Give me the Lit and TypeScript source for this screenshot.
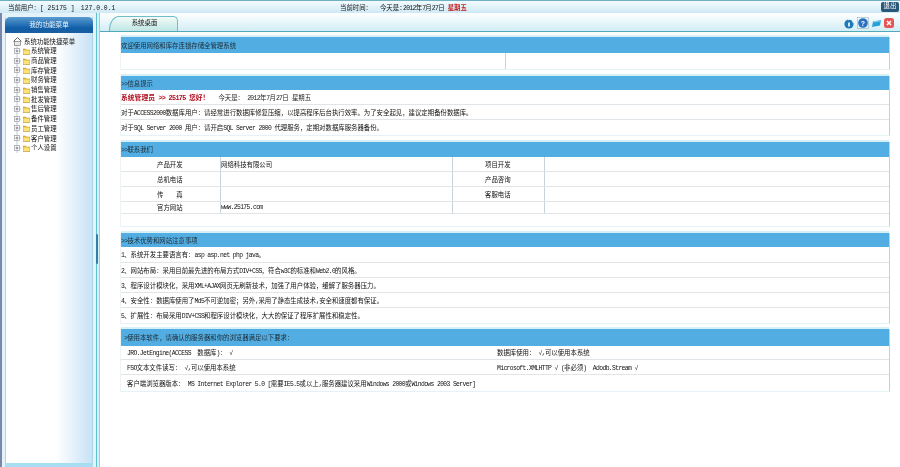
import { LitElement, html, css, svg } from "lit";
import { customElement } from "lit/decorators.js";

const tree = ["系统管理","商品管理","库存管理","财务管理","销售管理","批发管理","售后管理","备件管理","员工管理","客户管理","个人设置"];

/* The reference sets Latin at half an em: runs of Latin are wrapped so they can be narrowed. */
const t = (s: string) =>
  html`<span>${s.split(/([\x20-\x7e√]+)/).map((p, i) => (i % 2 ? html`<span class="l">${p}</span>` : p))}</span>`;

@customElement("app-root")
export class AppRoot extends LitElement {
  static styles = css`
    :host { display: block; width: 900px; height: 467px; overflow: hidden; background: #fff;
      font: 6.4px "Liberation Mono", "Noto Sans CJK SC", monospace; color: #111; filter: blur(0.3px); }
    .l { letter-spacing: -0.1em; white-space: pre; }
    .top { height: 13px; box-sizing: border-box; border-top: 1px solid #6fb0c4; background: linear-gradient(#f2fbfe, #cfe9f5); }
    .topin { display: flex; align-items: center; height: 12px; padding-left: 8px; }
    .user { width: 332px; }
    .today { margin-left: 8px; }
    .red { color: #c02020; font-weight: bold; }
    .exit { margin-left: auto; margin-right: 1px; width: 18px; height: 10px; background: #2a5878; color: #fff; border-radius: 2px; text-align: center; line-height: 10px; }
    .wrap { display: flex; height: 454px; }
    .side { width: 96px; box-sizing: border-box; border-left: 2px solid #7a86ab; padding: 4px 3px 0 3px; background: #e4f3fa; display: flex; flex-direction: column; }
    .panel { width: 86px; flex: 1; display: flex; flex-direction: column; border-left: 1px solid #a9d8e8; border-right: 1px solid #a9d8e8; background: linear-gradient(90deg, #fff 0, #fff 58%, #c8e2f6 100%); }
    .phead { height: 16px; margin: 0 -1px; background: linear-gradient(#5b9bd0, #0f5ea8 70%, #1d5f9e); border-radius: 5px 5px 0 0; color: #e8f4fb; text-align: center; line-height: 17px; font-size: 6.6px; }
    .tree { flex: 1; padding: 4px 0 0 7px; }
    .node { display: flex; align-items: center; gap: 1.5px; height: 9.7px; }
    .root { height: 9px; gap: 2px; }
    .pfoot { height: 4px; margin: 0 -1px; background: #a8dcf0; }
    .split { width: 4px; display: flex; align-items: center; border-left: 1.5px solid #5fbfd2; border-right: 1px solid #8fd3e2; background: #d8f1f6; box-sizing: border-box; }
    .grip { width: 2px; height: 30px; background: #2f7fa8; border-radius: 1px; margin: 18px 0 0 -1px; }
    .main { flex: 1; display: flex; flex-direction: column; min-width: 0; }
    .tabs { height: 19px; box-sizing: border-box; display: flex; align-items: flex-end; padding-left: 9px; border-bottom: 1.5px solid #4fa9bb; background: linear-gradient(#fff, #d6eff6 90%); position: relative; }
    .tab { width: 69px; height: 15px; box-sizing: border-box; padding-left: 2px; border: 1px solid #6fbccb; border-bottom: 0; border-radius: 10px 5px 0 0 / 14px 5px 0 0; background: linear-gradient(#f2fbf8, #bfe6e4); text-align: center; line-height: 14px; }
    .tools { position: absolute; right: 6px; top: 4px; display: flex; gap: 3px; align-items: center; }
    .content { padding: 5px 10px 0 20px; display: flex; flex-direction: column; gap: 6px; }
    .sec { box-sizing: border-box; border-right: 1px solid #c4d0d6; border-bottom: 1px solid #e3f3f6; border-left: 1px solid #eef3f5; }
    .s5 { margin-top: -1px; }
    .hd { background: #52ade2; box-shadow: 0 -2px 0 #d6f0f8; color: #1d2a33; display: flex; align-items: center; }
    .hd14 { height: 14px; }
    .hd15 { height: 15px; }
    .hd16 { height: 16px; }
    .hd17 { height: 17px; padding-left: 3px; }
    .row { display: flex; align-items: center; height: 15px; box-sizing: border-box; border-bottom: 1px solid #dfe5e8; white-space: nowrap; }
    .row:last-child { border-bottom: 0; }
    .r12 { height: 12px; }
    .r14 { height: 14px; }
    .r16 { height: 16px; }
    .alert { color: #b01020; font-weight: bold; font-size: 6.8px; }
    .today2 { color: #222; font-weight: normal; font-size: 6.4px; margin-left: 9px; }
    .c { box-sizing: border-box; height: 100%; display: flex; align-items: center; border-right: 1px solid #c6d3d8; }
    .c0 { width: 385px; }
    .c1 { width: 100px; padding-left: 36px; }
    .c2 { width: 232px; }
    .c3 { width: 92px; padding-left: 32px; }
    .c4 { flex: 1; border-right: 0; }
    .half { width: 370px; padding-left: 6px; box-sizing: border-box; }
    .half2 { padding-left: 6px; }
    .pad6 { padding-left: 6px; }
  `;

  folder() {
    return svg`<svg width="7" height="8" viewBox="0 0 8 8" preserveAspectRatio="none"><path d="M0 2h3l1 1h4v4.5H0z" fill="#f2c230" stroke="#a8862a" stroke-width=".5"/><rect x="0.6" y="3.6" width="6.8" height="3.4" fill="#fbe27a"/></svg>`;
  }
  plus() {
    return svg`<svg width="8" height="10" viewBox="0 0 8 10"><path d="M4 0v10M4 5h4" stroke="#9aa" stroke-width=".6"/><rect x="1.5" y="2.5" width="5" height="5" fill="#fff" stroke="#889" stroke-width=".6"/><path d="M2.5 5h3M4 3.5v3" stroke="#445" stroke-width=".6"/></svg>`;
  }
  render() {
    return html`
      <div class="top"><div class="topin">
        <span class="user">当前用户：[ 25175 ]　127.0.0.1</span>
        <span>当前时间：</span>
        <span class="today">今天是:<span class="l">2012</span>年<span class="l">7</span>月<span class="l">27</span>日<span class="l"> </span><span class="red">星期五</span></span>
        <span class="exit">退出</span>
      </div></div>
      <div class="wrap">
        <div class="side">
          <div class="panel">
            <div class="phead">我的功能菜单</div>
            <div class="tree">
              <div class="node root">
                <svg width="9" height="9" viewBox="0 0 9 9"><path d="M4.5 .5 8.5 4.5M4.5 .5 .5 4.5" stroke="#666" fill="none"/><rect x="1.5" y="4.5" width="6" height="4" fill="#e8e8e8" stroke="#666" stroke-width=".6"/></svg>
                系统功能快捷菜单
              </div>
              ${tree.map(n => html`<div class="node">${this.plus()}${this.folder()}<span>${n}</span></div>`)}
            </div>
            <div class="pfoot"></div>
          </div>
        </div>
        <div class="split"><div class="grip"></div></div>
        <div class="main">
          <div class="tabs">
            <div class="tab">系统桌面</div>
            <div class="tools">
              <svg width="10" height="11" viewBox="0 0 10 11"><circle cx="5" cy="6" r="4.6" fill="#1f78b8"/><path d="M4 1.6C7 .4 9 2 9.4 5" stroke="#e8f6fc" stroke-width="1.2" fill="none"/><path d="M4 4.5h2v4H4z" fill="#cfe6f5"/></svg>
              <svg width="12" height="12" viewBox="0 0 12 12"><rect x=".5" y=".5" width="11" height="11" fill="none" stroke="#8aa" stroke-width=".5"/><circle cx="6" cy="6" r="4.8" fill="#2a70c0"/><text x="6" y="8.6" font-size="7" text-anchor="middle" fill="#fff" font-family="Liberation Sans" font-weight="bold">?</text></svg>
              <svg width="9" height="7" viewBox="0 0 9 7"><path d="M1 1.5 9 0 8 5.5 0 7z" fill="#25a0d8"/><path d="M1.5 2 8.5 .8" stroke="#bfe8f8" stroke-width=".7"/></svg>
              <svg width="10" height="10" viewBox="0 0 10 10"><rect width="10" height="10" rx="2.5" fill="#e25858"/><path d="M3 3l4 4M7 3l-4 4" stroke="#fff" stroke-width="1.4"/></svg>
            </div>
          </div>
          <div class="content">
            <div class="sec">
              <div class="hd hd16">欢迎使用网络和库存连锁存储全管理系统</div>
              <div class="row r16"><div class="c c0"></div></div>
            </div>
            <div class="sec">
              <div class="hd hd14">${t(">>信息提示")}</div>
              <div class="row alert"><span>${t("系统管理员 >> 25175 您好！")}<span class="today2">${t("今天是： 2012年7月27日 星期五")}</span></span></div>
              <div class="row">${t("对于ACCESS2000数据库用户：请经常进行数据库修复压缩，以提高程序后台执行效率。为了安全起见，建议定期备份数据库。")}</div>
              <div class="row">${t("对于SQL Server 2000 用户：请开启SQL Server 2000 代理服务，定期对数据库服务器备份。")}</div>
            </div>
            <div class="sec">
              <div class="hd hd15">${t(">>联系我们")}</div>
              <div class="row"><div class="c c1">产品开发</div><div class="c c2">网络科技有限公司</div><div class="c c3">项目开发</div><div class="c c4"></div></div>
              <div class="row"><div class="c c1">总机电话</div><div class="c c2"></div><div class="c c3">产品咨询</div><div class="c c4"></div></div>
              <div class="row"><div class="c c1">传　　真</div><div class="c c2"></div><div class="c c3">客服电话</div><div class="c c4"></div></div>
              <div class="row r12"><div class="c c1">官方网站</div><div class="c c2">${t("www.25175.com")}</div><div class="c c3"></div><div class="c c4"></div></div>
              <div class="row r12"></div>
            </div>
            <div class="sec">
              <div class="hd hd14">${t(">>技术优势和网站注意事项")}</div>
              <div class="row r16">${t("1、系统开发主要语言有：asp asp.net php java。")}</div>
              <div class="row">${t("2、网站布局：采用目前最先进的布局方式DIV+CSS，符合w3C的标准和Web2.0的风格。")}</div>
              <div class="row">${t("3、程序设计模块化，采用XML+AJAX网页无刷新技术，加强了用户体验，缓解了服务器压力。")}</div>
              <div class="row">${t("4、安全性：数据库使用了Md5不可逆加密；另外,采用了静态生成技术,安全和速度都有保证。")}</div>
              <div class="row">${t("5、扩展性：布局采用DIV+CSS和程序设计模块化，大大的保证了程序扩展性和稳定性。")}</div>
            </div>
            <div class="sec s5">
              <div class="hd hd17">${t(">使用本软件，请确认的服务器和你的浏览器满足以下要求：")}</div>
              <div class="row r14"><span class="half">${t("JRO.JetEngine(ACCESS　数据库)： √")}</span><span class="half2">${t("数据库使用： √,可以使用本系统")}</span></div>
              <div class="row"><span class="half">${t("FSO文本文件读写： √,可以使用本系统")}</span><span class="half2">${t("Microsoft.XMLHTTP √ (非必须)  Adodb.Stream √")}</span></div>
              <div class="row r16 pad6">${t("客户端浏览器版本： MS Internet Explorer 5.0 [需要IE5.5或以上,服务器建议采用Windows 2000或Windows 2003 Server]")}</div>
            </div>
          </div>
        </div>
      </div>
    `;
  }
}
